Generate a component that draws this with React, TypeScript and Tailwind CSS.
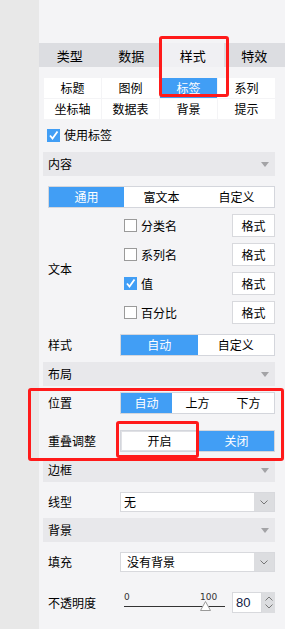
import React from "react";

function Check({ on }: { on: boolean }) {
  if (on)
    return (
      <div className="w-[13px] h-[13px] bg-[#419ef5] flex items-center justify-center shrink-0">
        <svg width="11" height="11" viewBox="0 0 11 11">
          <polyline points="2,5.5 4.5,8.5 9.5,1.5" fill="none" stroke="white" strokeWidth="1.8" />
        </svg>
      </div>
    );
  return <div className="w-[13px] h-[13px] bg-white border border-[#9a9a9a] shrink-0" />;
}

function Seg({ items, active, className = "" }: { items: string[]; active: number; className?: string }) {
  return (
    <div className={"flex border border-[#d4d6dc] bg-white " + className}>
      {items.map((t, i) => (
        <div
          key={t}
          className={
            "flex-1 flex items-center justify-center " +
            (i === active ? "bg-[#419ef5] text-white" : "text-black")
          }
        >
          {t}
        </div>
      ))}
    </div>
  );
}

function Header({ title, className = "" }: { title: string; className?: string }) {
  return (
    <div className={"h-[24px] bg-[#e8e8eb] flex items-center justify-between pl-[5px] pr-[6px] " + className}>
      <span>{title}</span>
      <svg width="8" height="5" viewBox="0 0 8 5">
        <polygon points="0,0 8,0 4,5" fill="#a3a3a6" />
      </svg>
    </div>
  );
}

function Chevron({ up = false }: { up?: boolean }) {
  return (
    <svg width="8" height="5" viewBox="0 0 8 5">
      <polyline
        points={up ? "0.5,4.5 4,1 7.5,4.5" : "0.5,0.5 4,4 7.5,0.5"}
        fill="none"
        stroke="#777"
        strokeWidth="1"
      />
    </svg>
  );
}

function Select({ value, pad }: { value: string; pad: string }) {
  return (
    <div className="flex-1 flex h-full border border-[#d8d9dd] bg-white">
      <div className={"flex-1 flex items-center " + pad}>{value}</div>
      <div className="w-[20px] bg-[#dcdde0] flex items-center justify-center">
        <Chevron />
      </div>
    </div>
  );
}

export default function App() {
  const subs = ["标题", "图例", "标签", "系列", "坐标轴", "数据表", "背景", "提示"];
  const textRows: [string, boolean][] = [
    ["分类名", false],
    ["系列名", false],
    ["值", true],
    ["百分比", false],
  ];
  return (
    <div className="w-[285px] h-[629px] flex relative overflow-hidden font-['Noto_Sans_CJK_SC','Noto_Sans',sans-serif] text-[12px] text-black leading-none">
      <div className="w-[39px] bg-[#e8e8e8] shrink-0" />
      <div className="flex-1 bg-[#f4f4f6] flex flex-col">
        <div className="h-[43px]" />
        <div className="h-[24px] grid grid-cols-4 bg-[#dcdde1] text-[13px]">
          {["类型", "数据", "样式", "特效"].map((t, i) => (
            <div key={t} className={"flex items-center justify-center " + (i === 2 ? "bg-[#f0f0f3]" : "")}>
              {t}
            </div>
          ))}
        </div>
        <div className="pl-[4px] pr-[10px] flex flex-col">
          <div className="mt-[11px] ml-[1px] grid grid-cols-4 gap-[1px]">
            {subs.map((t) => (
              <div
                key={t}
                className={
                  "h-[20px] flex items-center justify-center " +
                  (t === "标签" ? "bg-[#419ef5] text-white" : "bg-white")
                }
              >
                {t}
              </div>
            ))}
          </div>
          <div className="mt-[9px] h-[14px] flex items-center pl-[4px] gap-[4px]">
            <Check on={true} />
            <span>使用标签</span>
          </div>
          <Header title="内容" className="mt-[10px]" />
          <Seg items={["通用", "富文本", "自定义"]} active={0} className="mt-[10px] ml-[5px] h-[22px]" />
          <div className="mt-[6px] flex">
            <div className="w-[81px] pl-[5px] self-center">文本</div>
            <div className="flex-1 flex flex-col gap-[6px]">
              {textRows.map(([t, on]) => (
                <div key={t} className="h-[23px] flex items-center justify-between">
                  <div className="flex items-center gap-[4px]">
                    <Check on={on} />
                    <span>{t}</span>
                  </div>
                  <div className="w-[43px] h-[23px] border border-[#d8d9dd] bg-white flex items-center justify-center">
                    格式
                  </div>
                </div>
              ))}
            </div>
          </div>
          <div className="mt-[10px] flex items-center h-[22px]">
            <div className="w-[77px] pl-[5px]">样式</div>
            <Seg items={["自动", "自定义"]} active={0} className="flex-1 h-full" />
          </div>
          <Header title="布局" className="mt-[6px]" />
          <div className="mt-[6px] flex items-center h-[22px]">
            <div className="w-[77px] pl-[5px]">位置</div>
            <Seg items={["自动", "上方", "下方"]} active={0} className="flex-1 h-full" />
          </div>
          <div className="mt-[16px] flex items-center h-[22px]">
            <div className="w-[77px] pl-[5px]">重叠调整</div>
            <div className="flex-1 h-full flex gap-[1px] border border-[#d4d6dc] bg-[#e4e5e9]">
              <div className="flex-1 bg-white flex items-center justify-center border border-[#e0e1e5]">开启</div>
              <div className="flex-1 bg-[#419ef5] text-white flex items-center justify-center">关闭</div>
            </div>
          </div>
          <Header title="边框" className="mt-[6px]" />
          <div className="mt-[10px] flex items-center h-[20px]">
            <div className="w-[77px] pl-[5px]">线型</div>
            <Select value="无" pad="pl-[3px]" />
          </div>
          <Header title="背景" className="mt-[6px]" />
          <div className="mt-[10px] flex items-center h-[20px]">
            <div className="w-[77px] pl-[5px]">填充</div>
            <Select value="没有背景" pad="pl-[6px]" />
          </div>
          <div className="mt-[20px] flex items-center h-[21px]">
            <div className="w-[81px] pl-[5px]">不透明度</div>
            <div className="w-[101px] h-full relative">
              <span className="absolute left-0 top-[1px] text-[9px] font-['DejaVu_Sans',sans-serif] text-[#333]">0</span>
              <span className="absolute left-[76px] top-[1px] text-[9px] font-['DejaVu_Sans',sans-serif] text-[#333]">100</span>
              <div className="absolute left-0 right-0 top-[14px] h-[1px] bg-[#333]" />
              <svg className="absolute left-[76px] top-[9px]" width="11" height="10" viewBox="0 0 11 10">
                <polygon points="5.5,0.5 10.5,9.5 0.5,9.5" fill="white" stroke="#999" strokeWidth="1" />
              </svg>
            </div>
            <div className="ml-[7px] flex h-full">
              <div className="w-[30px] h-full bg-white border border-[#d8d9dd] flex items-center pl-[3px] text-[13px] text-[#111a44] font-['Liberation_Sans',sans-serif]">
                80
              </div>
              <div className="w-[13px] h-full bg-[#dcdde0] flex flex-col items-center justify-center gap-[3px]">
                <Chevron up />
                <Chevron />
              </div>
            </div>
          </div>
        </div>
      </div>
      <div className="absolute left-[159px] top-[36px] w-[70px] h-[61px] border-[3px] border-[#ff1a1a] rounded-[3px]" />
      <div className="absolute left-[28px] top-[388px] w-[256px] h-[73px] border-[3px] border-[#ff1a1a] rounded-[3px]" />
      <div className="absolute left-[116px] top-[421px] w-[83px] h-[37px] border-[3px] border-[#ff1a1a] rounded-[3px]" />
    </div>
  );
}
